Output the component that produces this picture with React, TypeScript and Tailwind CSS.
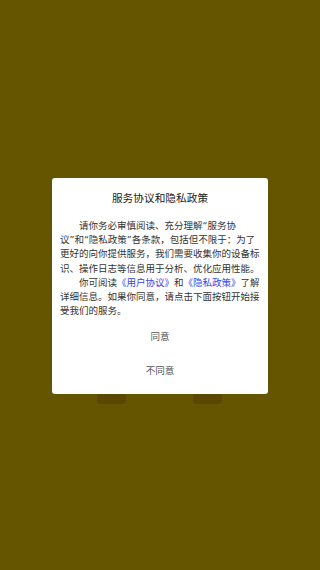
export default function App() {
    return (
        <div className="relative h-[570px] w-[320px] overflow-hidden bg-[#665500] font-['Roboto','Noto_Sans_CJK_SC',sans-serif]">
            {/* buttons of the page underneath, peeking out below the dialog */}
            <div className="absolute left-[97px] top-[384px] h-[20px] w-[29px] rounded-[4px] bg-[#5c4700]" />
            <div className="absolute left-[193px] top-[384px] h-[20px] w-[29px] rounded-[4px] bg-[#5c4700]" />

            <div className="absolute inset-0 flex items-start justify-center pt-[178px]">
                <div className="w-[216px] rounded-[3px] bg-white px-[8px] pt-[13px] pb-[6px]">
                    <h2 className="text-center text-[10.7px] leading-[16px] text-[#222]">
                        服务协议和隐私政策
                    </h2>
                    <div className="mt-[12px] font-['DejaVu_Sans','Noto_Sans_CJK_SC',sans-serif] text-[9.5px] leading-[14.2px] text-[#333]">
                        <p className="indent-[2em]">
                            请你务必审慎阅读、充分理解“服务协议”和“隐私政策”各条款，包括但不限于：为了更好的向你提供服务，我们需要收集你的设备标识、操作日志等信息用于分析、优化应用性能。
                        </p>
                        <p className="indent-[2em]">
                            你可阅读<span className="text-[#3344ee]">《用户协议》</span>和
                            <span className="text-[#3344ee]">《隐私政策》</span>
                            了解详细信息。如果你同意，请点击下面按钮开始接受我们的服务。
                        </p>
                    </div>
                    <div className="mt-[2px] flex flex-col text-[9.5px] text-[#555]">
                        <button className="h-[34px]">同意</button>
                        <button className="h-[34px]">不同意</button>
                    </div>
                </div>
            </div>
        </div>
    );
}
